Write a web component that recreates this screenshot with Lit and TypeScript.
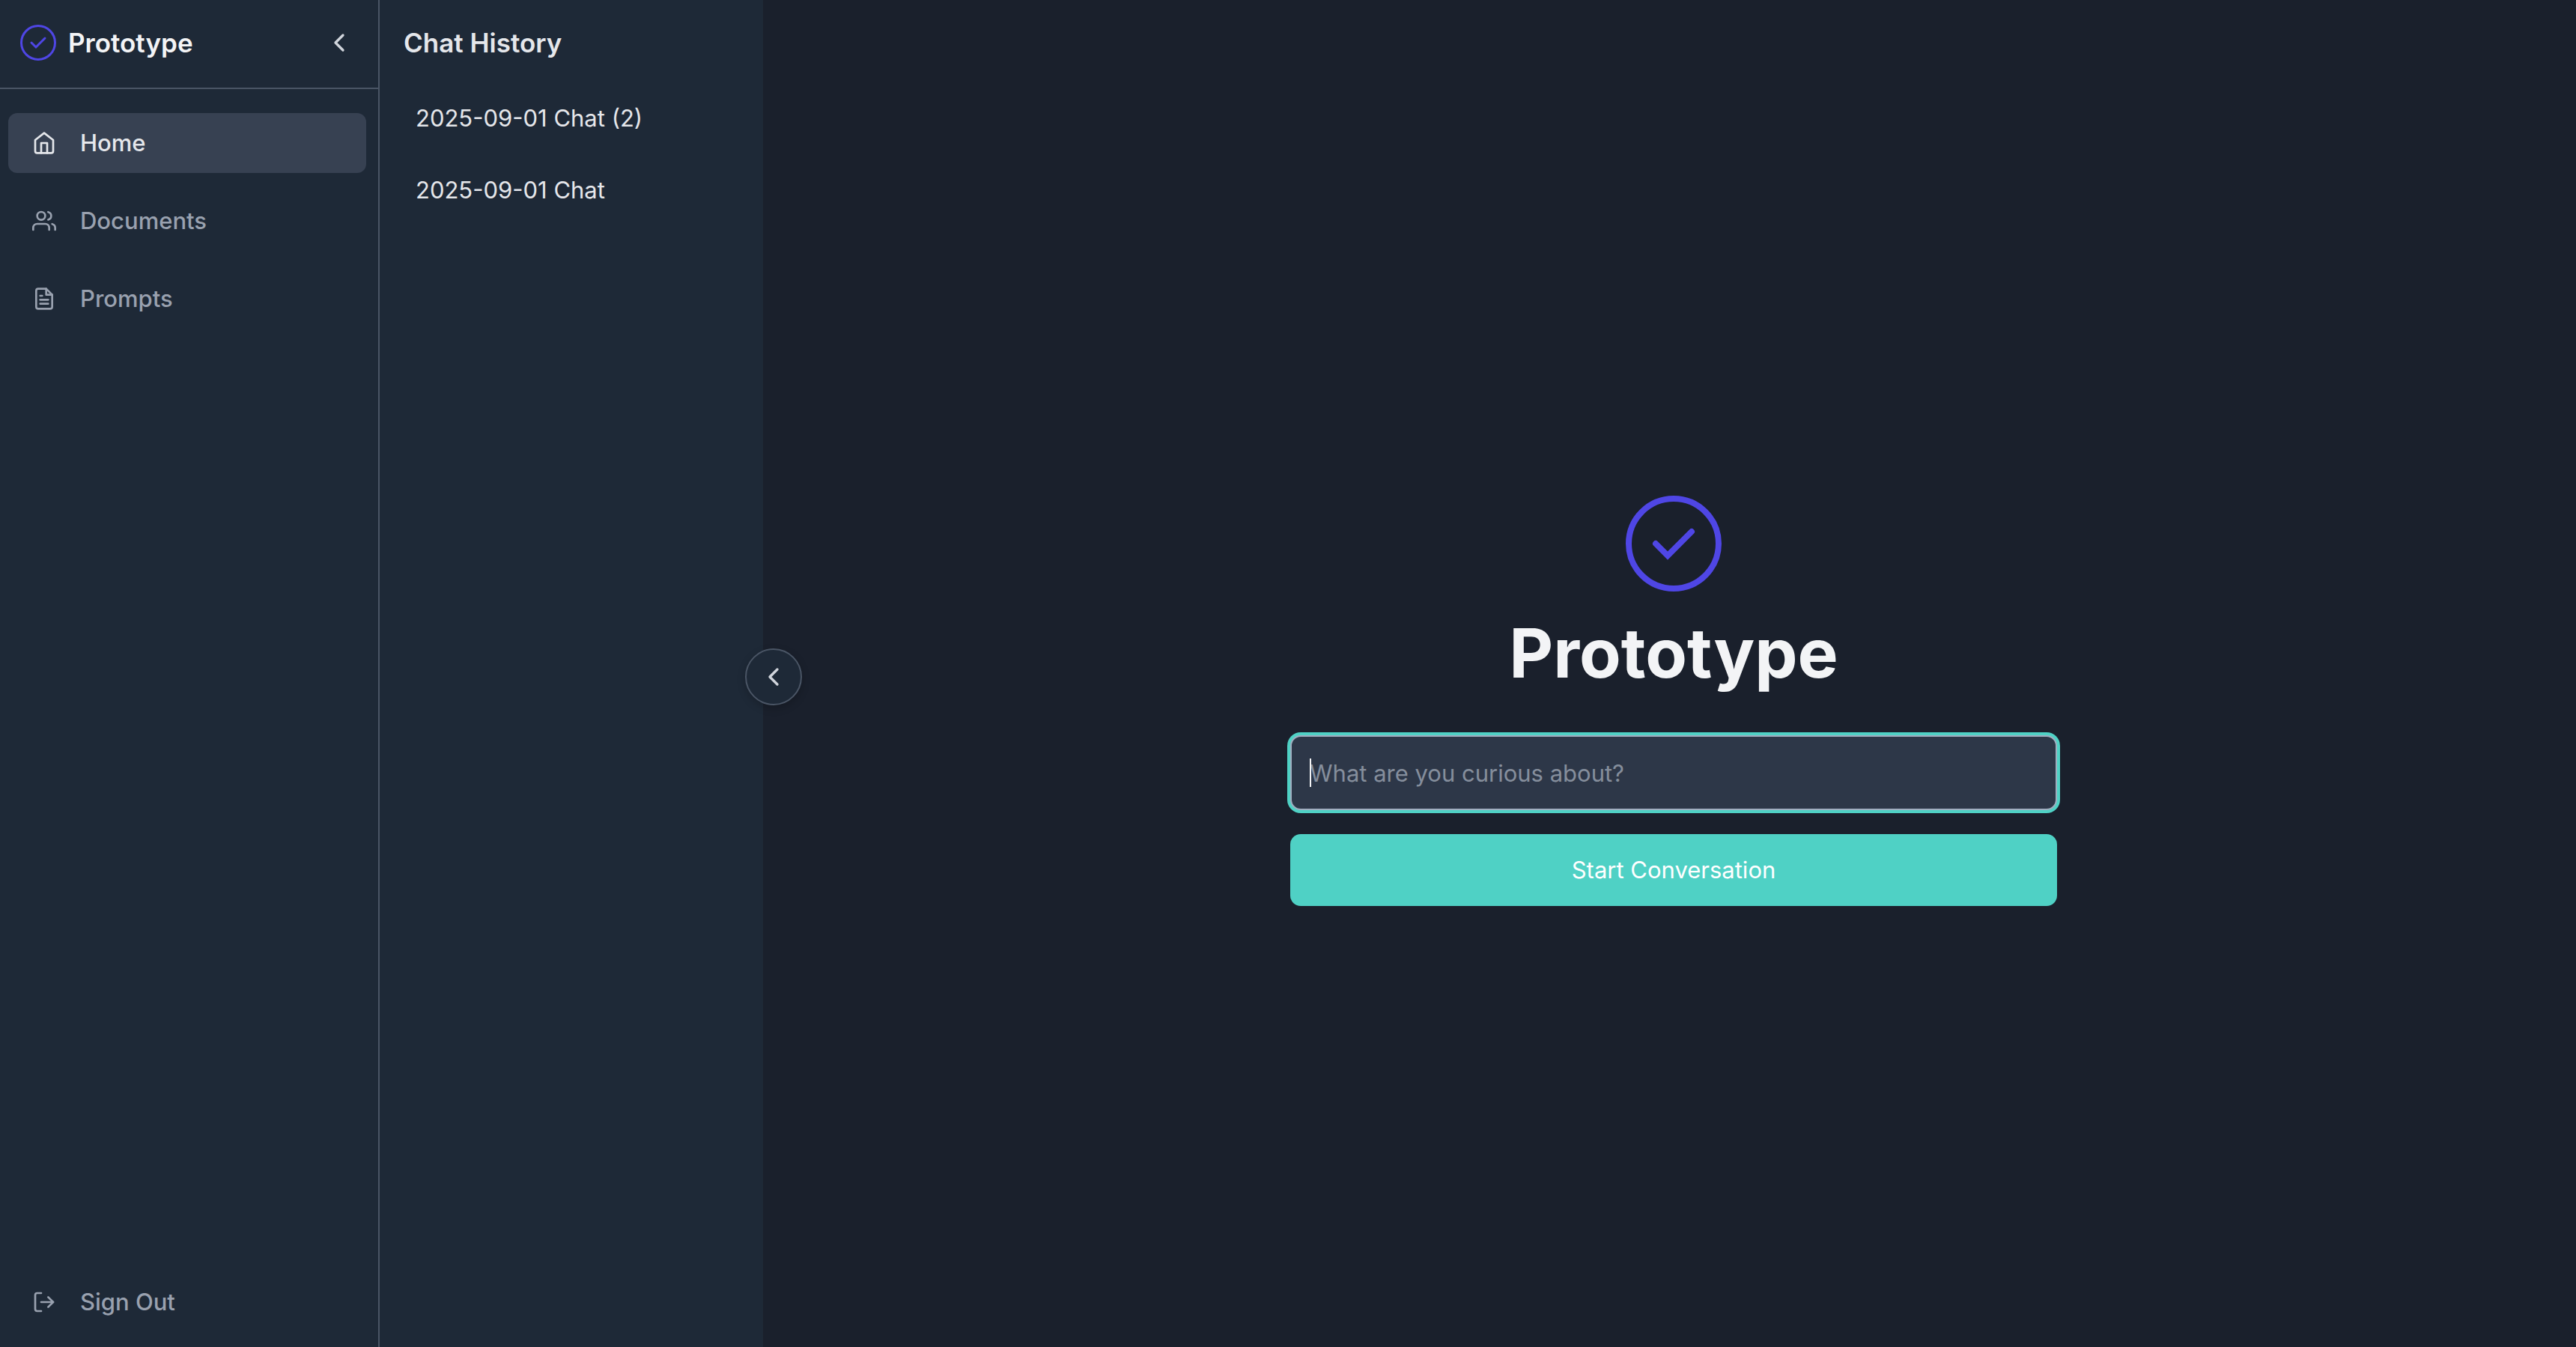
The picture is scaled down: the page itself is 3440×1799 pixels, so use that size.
import { LitElement, html, css, svg, type TemplateResult } from "lit";
import { customElement, property, state, query } from "lit/decorators.js";
import { classMap } from "lit/directives/class-map.js";

type IconName = "home" | "users" | "file" | "logout" | "chevron";

const ICONS: Record<IconName, TemplateResult> = {
  home: svg`
    <path d="M3 9l9-7 9 7v11a2 2 0 0 1-2 2H5a2 2 0 0 1-2-2z" />
    <polyline points="9 22 9 12 15 12 15 22" />`,
  users: svg`
    <path d="M17 21v-2a4 4 0 0 0-4-4H5a4 4 0 0 0-4 4v2" />
    <circle cx="9" cy="7" r="4" />
    <path d="M23 21v-2a4 4 0 0 0-3-3.87" />
    <path d="M16 3.13a4 4 0 0 1 0 7.75" />`,
  file: svg`
    <path d="M14 2H6a2 2 0 0 0-2 2v16a2 2 0 0 0 2 2h12a2 2 0 0 0 2-2V8z" />
    <polyline points="14 2 14 8 20 8" />
    <line x1="16" y1="13" x2="8" y2="13" />
    <line x1="16" y1="17" x2="8" y2="17" />
    <polyline points="10 9 9 9 8 9" />`,
  logout: svg`
    <path d="M9 21H5a2 2 0 0 1-2-2V5a2 2 0 0 1 2-2h4" />
    <polyline points="16 17 21 12 16 7" />
    <line x1="21" y1="12" x2="9" y2="12" />`,
  chevron: svg`<polyline points="15 18 9 12 15 6" />`,
};

@customElement("line-icon")
export class LineIcon extends LitElement {
  static styles = css`
    :host {
      display: inline-flex;
      flex: none;
    }
    .glyph {
      width: 100%;
      height: 100%;
      fill: none;
      stroke: currentColor;
      stroke-width: 2;
      stroke-linecap: round;
      stroke-linejoin: round;
    }
  `;

  @property() name: IconName = "home";

  render() {
    return html`<svg class="glyph" viewBox="0 0 24 24" aria-hidden="true">${ICONS[this.name]}</svg>`;
  }
}

@customElement("brand-mark")
export class BrandMark extends LitElement {
  static styles = css`
    :host {
      display: inline-flex;
      flex: none;
    }
    .mark {
      width: 100%;
      height: 100%;
      fill: none;
      stroke: #4f46e5;
      stroke-linecap: round;
    }
  `;

  @property({ type: Boolean }) small = false;

  render() {
    return this.small
      ? html`<svg class="mark" viewBox="0 0 48 48" stroke-width="3" aria-hidden="true">
          <circle cx="24" cy="24" r="22.5" />
          <path d="M15 24l6 6 12-12" />
        </svg>`
      : html`<svg class="mark" viewBox="0 0 128 128" stroke-width="8" aria-hidden="true">
          <circle cx="64" cy="64" r="60" />
          <path d="M40 64l16 16 32-32" />
        </svg>`;
  }
}

interface NavItem {
  label: string;
  icon: IconName;
}

const NAV: NavItem[] = [
  { label: "Home", icon: "home" },
  { label: "Documents", icon: "users" },
  { label: "Prompts", icon: "file" },
];

const CHATS = ["2025-09-01 Chat (2)", "2025-09-01 Chat"];

@customElement("app-root")
export class AppRoot extends LitElement {
  static styles = css`
    :host {
      display: flex;
      min-height: 100vh;
      background: #1a202c;
      color: #e5e7eb;
      font-family: Inter, "Liberation Sans", sans-serif;
      font-size: 31px;
      line-height: 48px;
    }
    * {
      box-sizing: border-box;
    }
    h1,
    h2,
    ul {
      margin: 0;
      padding: 0;
    }
    ul {
      list-style: none;
    }
    button,
    input {
      font: inherit;
      color: inherit;
    }
    button {
      border: 0;
      background: none;
      padding: 0;
      cursor: pointer;
    }
    a {
      color: inherit;
      text-decoration: none;
    }
    .sidebar {
      display: flex;
      flex-direction: column;
      flex: none;
      width: 507px;
      background: #1e2937;
      border-right: 2px solid #4a5565;
    }
    .brand {
      display: flex;
      align-items: center;
      gap: 16px;
      height: 119px;
      padding: 0 32px 3px 27px;
      border-bottom: 2px solid #4a5565;
    }
    .brand-mark {
      width: 48px;
      height: 48px;
    }
    .brand-name {
      flex: 1;
      color: #f3f4f6;
      font-size: 35px;
      font-weight: 600;
    }
    .collapse {
      display: flex;
      color: #d1d5dc;
    }
    .chevron {
      width: 40px;
      height: 40px;
    }
    .nav {
      display: flex;
      flex-direction: column;
      gap: 24px;
      padding: 32px 16px 0 11px;
    }
    .nav-item {
      display: flex;
      align-items: center;
      gap: 32px;
      width: 100%;
      height: 80px;
      padding: 0 32px;
      border-radius: 12px;
      color: #99a1af;
      font-weight: 500;
    }
    .nav-item.active {
      background: #374152;
      color: #e5e7eb;
    }
    .nav-icon {
      width: 32px;
      height: 32px;
    }
    .account {
      margin-top: auto;
      padding: 0 16px 20px 11px;
    }
    .history {
      position: relative;
      flex: none;
      width: 512px;
      padding: 33px 32px;
      background: #1e2937;
    }
    .history-title {
      font-size: 35px;
      font-weight: 600;
    }
    .history-list {
      padding-top: 29px;
    }
    .chat {
      display: block;
      padding: 24px 16px;
    }
    .toggle {
      position: absolute;
      top: calc(50% + 4px);
      right: -52px;
      display: flex;
      align-items: center;
      justify-content: center;
      width: 76px;
      height: 76px;
      margin-top: -38px;
      border: 2px solid #4a5565;
      border-radius: 50%;
      background: #1e2937;
      color: #d1d5dc;
      box-shadow: 0 4px 12px rgba(0, 0, 0, 0.2);
    }
    .main {
      display: flex;
      flex: 1;
      flex-direction: column;
      align-items: center;
      justify-content: center;
      padding: 73px 0 0 11px;
    }
    .hero-mark {
      width: 128px;
      height: 128px;
    }
    .hero-title {
      padding: 22px 0 50px;
      color: #f3f4f6;
      font-size: 91px;
      font-weight: 700;
      line-height: 120px;
    }
    .form {
      display: flex;
      flex-direction: column;
      gap: 32px;
      width: 100%;
      max-width: 1024px;
    }
    .field {
      position: relative;
      display: flex;
    }
    .question {
      width: 100%;
      height: 100px;
      padding: 0 24px;
      border: 2px solid #a0aec0;
      border-radius: 14px;
      outline: none;
      background: #2d3748;
      box-shadow: 0 0 0 4px #4fd1c5;
      caret-color: transparent;
    }
    .question::placeholder {
      color: #858e9c;
      opacity: 1;
    }
    .caret {
      position: absolute;
      top: 31px;
      left: 26px;
      width: 2px;
      height: 38px;
      background: #f3f4f6;
      pointer-events: none;
    }
    .question:not(:placeholder-shown) {
      caret-color: #f3f4f6;
    }
    .question:not(:placeholder-shown) + .caret {
      display: none;
    }
    .submit {
      height: 96px;
      border-radius: 14px;
      background: #4fd1c5;
      color: #ffffff;
    }
  `;

  @state() private current = "Home";
  @query(".question") private question!: HTMLInputElement;

  firstUpdated() {
    this.question.focus();
  }

  private navRow(item: NavItem) {
    return html`<a
      href="#"
      class=${classMap({ "nav-item": true, active: item.label === this.current })}
      @click=${() => (this.current = item.label)}
    >
      <line-icon class="nav-icon" .name=${item.icon}></line-icon>${item.label}
    </a>`;
  }

  render() {
    return html`
      <aside class="sidebar">
        <header class="brand">
          <brand-mark class="brand-mark" small></brand-mark>
          <span class="brand-name">Prototype</span>
          <button class="collapse" type="button" aria-label="Collapse sidebar">
            <line-icon class="chevron" name="chevron"></line-icon>
          </button>
        </header>
        <nav class="nav">${NAV.map((item) => this.navRow(item))}</nav>
        <div class="account">
          <button class="nav-item" type="button">
            <line-icon class="nav-icon" name="logout"></line-icon>Sign Out
          </button>
        </div>
      </aside>
      <section class="history">
        <h2 class="history-title">Chat History</h2>
        <ul class="history-list">
          ${CHATS.map((chat) => html`<li><a class="chat" href="#">${chat}</a></li>`)}
        </ul>
        <button class="toggle" type="button" aria-label="Collapse chat history">
          <line-icon class="chevron" name="chevron"></line-icon>
        </button>
      </section>
      <main class="main">
        <brand-mark class="hero-mark"></brand-mark>
        <h1 class="hero-title">Prototype</h1>
        <form class="form" @submit=${(e: Event) => e.preventDefault()}>
          <div class="field">
            <input
              class="question"
              type="text"
              aria-label="Question"
              placeholder="What are you curious about?"
            />
            <span class="caret"></span>
          </div>
          <button class="submit" type="submit">Start Conversation</button>
        </form>
      </main>
    `;
  }
}
